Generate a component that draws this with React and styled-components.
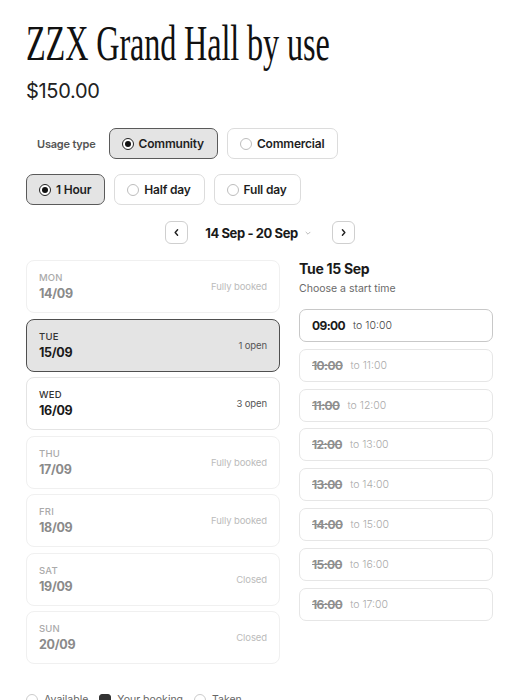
import React from "react";
import styled, { createGlobalStyle, css } from "styled-components";

const Global = createGlobalStyle`
  html, body { margin: 0; padding: 0; background: #fff; }
  body { font-family: Inter, "Noto Sans", sans-serif; color: #1a1a1a; }
  * { box-sizing: border-box; }
`;

const Page = styled.div`
  width: 520px;
  height: 700px;
  overflow: hidden;
  padding: 18px 26px 0 26px;
  display: flex;
  flex-direction: column;
`;

const Title = styled.h1`
  margin: 0;
  font-family: "Liberation Serif", "Times New Roman", serif;
  font-weight: 400;
  font-size: 50px;
  line-height: 50px;
  color: #111;
  white-space: nowrap;
  transform: scaleX(0.645);
  transform-origin: left center;
  letter-spacing: -0.2px;
`;

const Price = styled.div`
  margin-top: 11px;
  font-size: 20px;
  line-height: 24px;
  font-weight: 400;
  color: #222;
  letter-spacing: -0.3px;
`;

const Row = styled.div`
  display: flex;
  align-items: center;
  gap: ${(p) => p.$gap || 9}px;
  margin-top: ${(p) => p.$mt || 0}px;
`;

const Label = styled.span`
  font-size: 11px;
  font-weight: 600;
  color: #555;
  padding-left: 11px;
  margin-right: 4px;
  letter-spacing: -0.2px;
`;

const Option = styled.button`
  height: 31px;
  display: inline-flex;
  align-items: center;
  gap: 5px;
  padding: 0 13px 0 12px;
  border-radius: 7px;
  font-family: inherit;
  font-size: 12px;
  font-weight: 600;
  color: #1f1f1f;
  letter-spacing: -0.2px;
  cursor: pointer;
  ${(p) =>
    p.$active
      ? css`
          background: #e4e4e4;
          border: 1px solid #5a5a5a;
        `
      : css`
          background: #fff;
          border: 1px solid #dcdcdc;
        `}
`;

const Radio = styled.span`
  width: 12px;
  height: 12px;
  border-radius: 50%;
  flex: none;
  background: #fff;
  border: 1px solid ${(p) => (p.$on ? "#222" : "#bdbdbd")};
  display: inline-flex;
  align-items: center;
  justify-content: center;
  &::after {
    content: "";
    width: 6px;
    height: 6px;
    border-radius: 50%;
    background: #111;
    display: ${(p) => (p.$on ? "block" : "none")};
  }
`;

const Nav = styled.div`
  display: flex;
  align-items: center;
  justify-content: center;
  margin-top: 16px;
  height: 23px;
`;

const NavBtn = styled.button`
  width: 23px;
  height: 23px;
  border-radius: 6px;
  border: 1px solid #cfcfcf;
  background: #fff;
  display: inline-flex;
  align-items: center;
  justify-content: center;
  padding: 0;
`;

const Range = styled.div`
  display: flex;
  align-items: center;
  gap: 6px;
  margin: 0 20px 0 17px;
  font-size: 13px;
  font-weight: 700;
  color: #1a1a1a;
  letter-spacing: -0.4px;
`;

const Columns = styled.div`
  display: grid;
  grid-template-columns: 254px 194px;
  column-gap: 19px;
  margin-top: 16px;
`;

const DayList = styled.div`
  display: flex;
  flex-direction: column;
  gap: 5.5px;
`;

const DayCard = styled.div`
  height: 53px;
  border-radius: 8px;
  padding: 0 12px;
  display: flex;
  align-items: center;
  justify-content: space-between;
  ${(p) =>
    p.$selected
      ? css`
          background: #e4e4e4;
          border: 1px solid #4f4f4f;
        `
      : p.$disabled
      ? css`
          background: #fff;
          border: 1px solid #f0f0f0;
        `
      : css`
          background: #fff;
          border: 1px solid #e4e4e4;
        `}
`;

const DayText = styled.div`
  display: flex;
  flex-direction: column;
  gap: 3px;
`;

const DayName = styled.span`
  font-size: 9.5px;
  font-weight: 500;
  letter-spacing: 0.2px;
  color: ${(p) => (p.$disabled ? "#aaa" : "#333")};
`;

const DayDate = styled.span`
  font-size: 12.5px;
  font-weight: 700;
  letter-spacing: -0.3px;
  color: ${(p) => (p.$disabled ? "#8a8a8a" : "#1a1a1a")};
`;

const Status = styled.span`
  font-size: 9.5px;
  color: ${(p) => (p.$disabled ? "#bbb" : "#555")};
  letter-spacing: -0.1px;
`;

const SlotCol = styled.div`
  display: flex;
  flex-direction: column;
`;

const SlotTitle = styled.div`
  font-size: 14px;
  font-weight: 700;
  color: #1a1a1a;
  letter-spacing: -0.3px;
  line-height: 18px;
`;

const SlotHint = styled.div`
  font-size: 10.5px;
  color: #6a6a6a;
  margin-top: 4px;
  line-height: 14px;
`;

const SlotList = styled.div`
  display: flex;
  flex-direction: column;
  gap: 6.8px;
  margin-top: 13px;
`;

const Slot = styled.div`
  height: 33px;
  border-radius: 7px;
  border: 1px solid ${(p) => (p.$disabled ? "#e6e6e6" : "#c8c8c8")};
  display: flex;
  align-items: center;
  gap: 8px;
  padding: 0 12px;
`;

const SlotTime = styled.span`
  font-size: 12px;
  font-weight: 700;
  letter-spacing: -0.6px;
  color: ${(p) => (p.$disabled ? "#8f8f8f" : "#1a1a1a")};
  text-decoration: ${(p) => (p.$disabled ? "line-through" : "none")};
`;

const SlotEnd = styled.span`
  font-size: 10.5px;
  font-weight: 300;
  color: ${(p) => (p.$disabled ? "#aaa" : "#444")};
`;

const Legend = styled.div`
  display: flex;
  align-items: center;
  gap: 11px;
  margin-top: 29px;
  font-size: 10.5px;
  color: #666;
`;

const LegendItem = styled.span`
  display: inline-flex;
  align-items: center;
  gap: 6px;
`;

const Swatch = styled.span`
  width: 12px;
  height: 12px;
  flex: none;
  border-radius: ${(p) => (p.$square ? "3px" : "50%")};
  background: ${(p) => (p.$dark ? "#333" : "#fff")};
  border: 1px solid ${(p) => (p.$dark ? "#333" : "#ccc")};
`;

const Chevron = ({ dir }) => (
  <svg width="9" height="9" viewBox="0 0 10 10" fill="none">
    <path
      d={dir === "left" ? "M6.2 2 L3.5 5 L6.2 8" : "M3.8 2 L6.5 5 L3.8 8"}
      stroke="#222"
      strokeWidth="1.6"
      strokeLinecap="round"
      strokeLinejoin="round"
    />
  </svg>
);

const ChevronDown = () => (
  <svg width="8" height="8" viewBox="0 0 10 10" fill="none">
    <path d="M2.5 4 L5 6.5 L7.5 4" stroke="#aaa" strokeWidth="1" strokeLinecap="round" />
  </svg>
);

const days = [
  { name: "MON", date: "14/09", status: "Fully booked", disabled: true },
  { name: "TUE", date: "15/09", status: "1 open", selected: true },
  { name: "WED", date: "16/09", status: "3 open" },
  { name: "THU", date: "17/09", status: "Fully booked", disabled: true },
  { name: "FRI", date: "18/09", status: "Fully booked", disabled: true },
  { name: "SAT", date: "19/09", status: "Closed", disabled: true },
  { name: "SUN", date: "20/09", status: "Closed", disabled: true },
];

const slots = [
  ["09:00", "10:00", false],
  ["10:00", "11:00", true],
  ["11:00", "12:00", true],
  ["12:00", "13:00", true],
  ["13:00", "14:00", true],
  ["14:00", "15:00", true],
  ["15:00", "16:00", true],
  ["16:00", "17:00", true],
];

export default function App() {
  return (
    <>
      <Global />
      <Page>
        <Title>ZZX Grand Hall by use</Title>
        <Price>$150.00</Price>

        <Row $mt={25}>
          <Label>Usage type</Label>
          <Option $active>
            <Radio $on />
            Community
          </Option>
          <Option>
            <Radio />
            Commercial
          </Option>
        </Row>

        <Row $mt={15}>
          <Option $active>
            <Radio $on />1 Hour
          </Option>
          <Option>
            <Radio />
            Half day
          </Option>
          <Option>
            <Radio />
            Full day
          </Option>
        </Row>

        <Nav>
          <NavBtn aria-label="Previous week">
            <Chevron dir="left" />
          </NavBtn>
          <Range>
            14 Sep - 20 Sep
            <ChevronDown />
          </Range>
          <NavBtn aria-label="Next week">
            <Chevron dir="right" />
          </NavBtn>
        </Nav>

        <Columns>
          <DayList>
            {days.map((d) => (
              <DayCard key={d.name} $selected={d.selected} $disabled={d.disabled}>
                <DayText>
                  <DayName $disabled={d.disabled}>{d.name}</DayName>
                  <DayDate $disabled={d.disabled}>{d.date}</DayDate>
                </DayText>
                <Status $disabled={d.disabled}>{d.status}</Status>
              </DayCard>
            ))}
          </DayList>
          <SlotCol>
            <SlotTitle>Tue 15 Sep</SlotTitle>
            <SlotHint>Choose a start time</SlotHint>
            <SlotList>
              {slots.map(([a, b, dis]) => (
                <Slot key={a} $disabled={dis}>
                  <SlotTime $disabled={dis}>{a}</SlotTime>
                  <SlotEnd $disabled={dis}>to {b}</SlotEnd>
                </Slot>
              ))}
            </SlotList>
          </SlotCol>
        </Columns>

        <Legend>
          <LegendItem>
            <Swatch />
            Available
          </LegendItem>
          <LegendItem>
            <Swatch $square $dark />
            Your booking
          </LegendItem>
          <LegendItem>
            <Swatch />
            Taken
          </LegendItem>
        </Legend>
      </Page>
    </>
  );
}
